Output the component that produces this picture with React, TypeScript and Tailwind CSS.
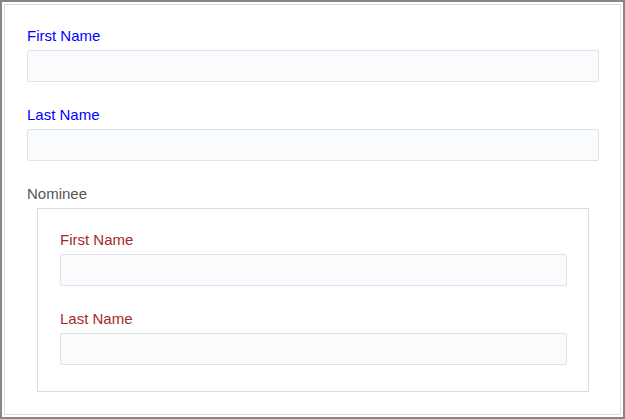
import React from 'react';

const Field = ({ label, color }: { label: string; color: string }) => (
  <div className="mb-[24px] last:mb-0">
    <label className={`block text-[15px] leading-[18px] mb-[5px] ${color}`}>{label}</label>
    <input
      type="text"
      className="block w-full h-[32px] bg-[#f9fbfd] border border-[#dde3e8] rounded-[2px] outline-none"
    />
  </div>
);

export default function App() {
  return (
    <div
      className="w-[625px] h-[419px] border-2 border-[#868686] p-[2px] bg-white"
      style={{ fontFamily: '"Liberation Sans", Arial, sans-serif' }}
    >
      <div className="h-full border border-[#d8dfe5] pl-[22px] pr-[21px] pt-[22px]">
        <Field label="First Name" color="text-[#0000ff]" />
        <Field label="Last Name" color="text-[#0000ff]" />
        <div>
          <div className="text-[15px] leading-[18px] mb-[5px] text-[#555555]">Nominee</div>
          <div className="mx-[10px] border border-[#d5dde5] pl-[22px] pr-[21px] pt-[22px] pb-[26px]">
            <Field label="First Name" color="text-[#a52a2a]" />
            <Field label="Last Name" color="text-[#a52a2a]" />
          </div>
        </div>
      </div>
    </div>
  );
}
